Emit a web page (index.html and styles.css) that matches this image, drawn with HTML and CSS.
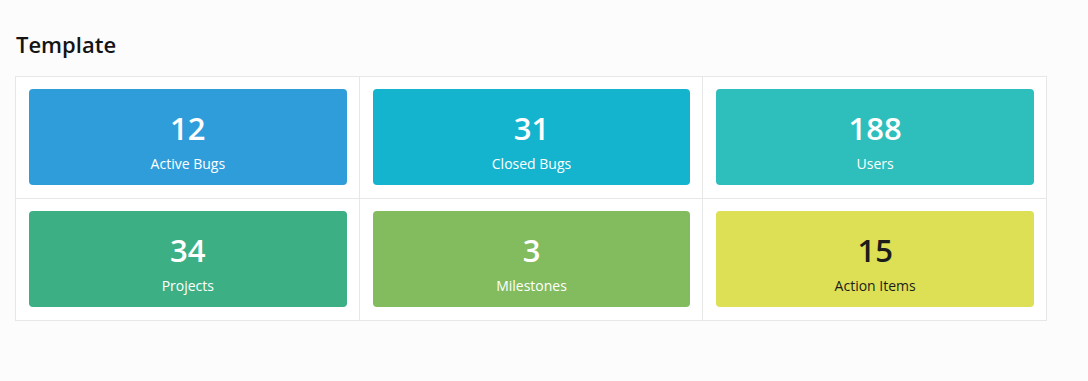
FILE: index.html
```html
<!DOCTYPE html>
<html lang="en">
<head>
    <meta charset="UTF-8">
    <meta name="viewport" content="width=device-width, initial-scale=1.0">
    <title>Template</title>
    <link rel="stylesheet" href="styles.css">
</head>
<body>
    <h1 class="page-title">Template</h1>

    <div class="stat-grid">
        <div class="stat-cell">
            <div class="stat-card blue">
                <div class="stat-value">12</div>
                <div class="stat-label">Active Bugs</div>
            </div>
        </div>
        <div class="stat-cell">
            <div class="stat-card cyan">
                <div class="stat-value">31</div>
                <div class="stat-label">Closed Bugs</div>
            </div>
        </div>
        <div class="stat-cell">
            <div class="stat-card teal">
                <div class="stat-value">188</div>
                <div class="stat-label">Users</div>
            </div>
        </div>
        <div class="stat-cell">
            <div class="stat-card green">
                <div class="stat-value">34</div>
                <div class="stat-label">Projects</div>
            </div>
        </div>
        <div class="stat-cell">
            <div class="stat-card lime">
                <div class="stat-value">3</div>
                <div class="stat-label">Milestones</div>
            </div>
        </div>
        <div class="stat-cell">
            <div class="stat-card yellow">
                <div class="stat-value">15</div>
                <div class="stat-label">Action Items</div>
            </div>
        </div>
    </div>
</body>
</html>
```

FILE: styles.css
```css
:root {
    --line: #e7e7e7;
}

body {
    font-family: 'Open Sans', 'Noto Sans', sans-serif;
    background: #fcfcfc;
    color: #1a1a1a;
    margin: 0;
    padding: 29px 15px 0;
}

/* title */
.page-title {
    font-size: 22px;
    font-weight: 600;
    line-height: 30px;
    margin: 0 0 17px 1px;
    color: #141414;
}

/* stat grid */
.stat-grid {
    width: 1031px;
    display: grid;
    grid-template-columns: repeat(3, 1fr);
    background: #fff;
    border-top: 1px solid var(--line);
    border-left: 1px solid var(--line);
}

.stat-cell {
    padding: 12px 12px 13px 13px;
    border-right: 1px solid var(--line);
    border-bottom: 1px solid var(--line);
}

.stat-card {
    height: 96px;
    box-sizing: border-box;
    padding-top: 19px;
    border-radius: 4px;
    text-align: center;
    color: #fff;
}

.stat-value {
    font-size: 31px;
    font-weight: 600;
    line-height: 40px;
}

.stat-label {
    font-size: 14px;
    line-height: 20px;
    margin-top: 6px;
}

.blue { background: #309ddb; }
.cyan { background: #14b4cf; }
.teal { background: #2ebebc; }
.green { background: #3caf84; }
.lime { background: #83bc5f; }
.yellow { background: #dde054; color: #1c1c1c; }
```
